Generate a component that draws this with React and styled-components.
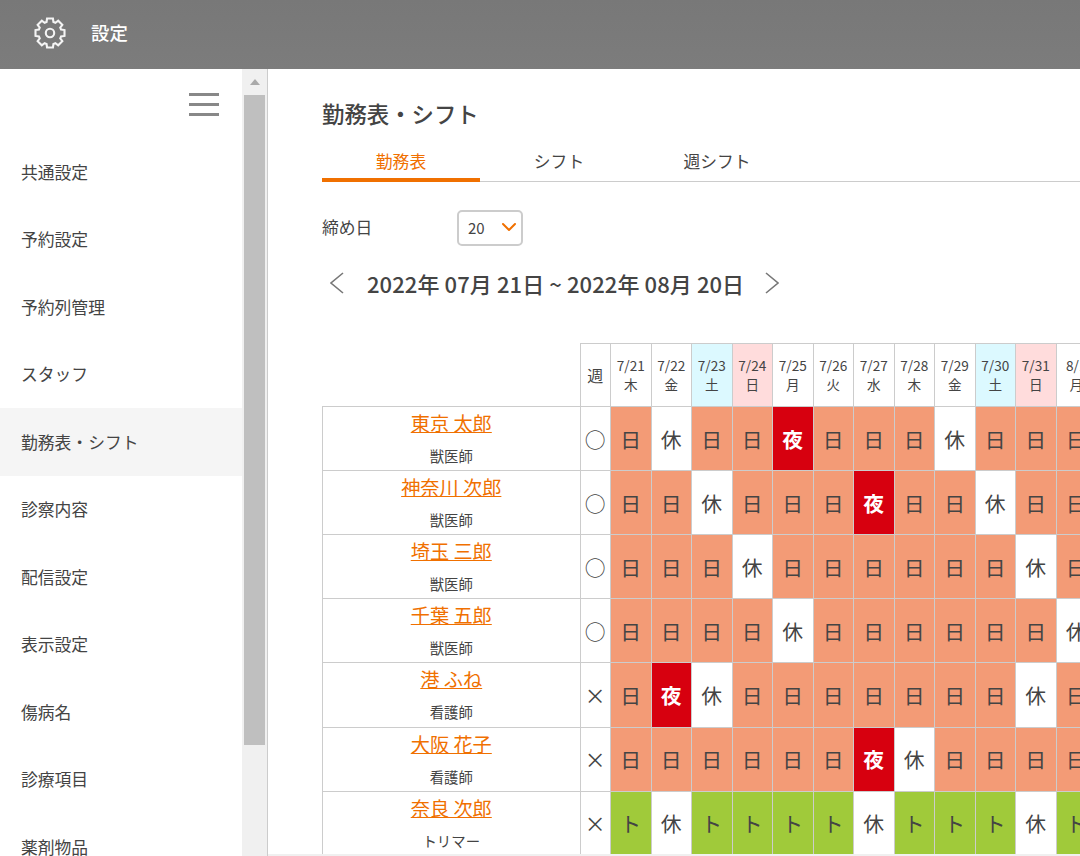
import React from 'react';
import styled, { createGlobalStyle } from 'styled-components';
import { ChevronDown } from 'lucide-react';

const menuItems = ['共通設定', '予約設定', '予約列管理', 'スタッフ', '勤務表・シフト', '診察内容', '配信設定', '表示設定', '傷病名', '診療項目', '薬剤物品'];

const days = [
  ['7/21', '木'], ['7/22', '金'], ['7/23', '土', 'sat'], ['7/24', '日', 'sun'], ['7/25', '月'], ['7/26', '火'],
  ['7/27', '水'], ['7/28', '木'], ['7/29', '金'], ['7/30', '土', 'sat'], ['7/31', '日', 'sun'], ['8/1', '月'],
];

const staff = [
  { name: '東京 太郎', role: '獣医師', week: '○', shifts: '日休日日夜日日日休日日日' },
  { name: '神奈川 次郎', role: '獣医師', week: '○', shifts: '日日休日日日夜日日休日日' },
  { name: '埼玉 三郎', role: '獣医師', week: '○', shifts: '日日日休日日日日日日休日' },
  { name: '千葉 五郎', role: '獣医師', week: '○', shifts: '日日日日休日日日日日日休' },
  { name: '港 ふね', role: '看護師', week: '×', shifts: '日夜休日日日日日日日休日' },
  { name: '大阪 花子', role: '看護師', week: '×', shifts: '日日日日日日夜休日日日日' },
  { name: '奈良 次郎', role: 'トリマー', week: '×', shifts: 'ト休トトトト休トトト休ト' },
];

const GlobalStyle = createGlobalStyle`
  html, body {
    margin: 0;
    height: 100%;
    overflow: hidden;
    background: #fff;
    color: #444;
    font-family: "Noto Sans CJK JP", "Noto Sans", sans-serif;
  }
`;

const Page = styled.div`
  display: flex;
  flex-direction: column;
  height: 856px;
  overflow: hidden;
`;

const Header = styled.header`
  display: flex;
  align-items: center;
  flex: 0 0 69px;
  box-sizing: border-box;
  padding: 0 0 3px 34px;
  gap: 25px;
  background: linear-gradient(#787878, #7c7c7c);
  color: #fff;
  font-size: 18.4px;
  font-weight: 500;

  span {
    margin-bottom: 2px;
  }
`;

const Body = styled.div`
  display: flex;
  flex: 1;
  min-height: 0;
`;

const Sidebar = styled.aside`
  display: flex;
  flex: 0 0 268px;
  border-right: 1px solid #ccc;
  box-sizing: border-box;
`;

const MenuColumn = styled.nav`
  flex: 1;
  min-width: 0;
  overflow: hidden;
`;

const MenuToggle = styled.div`
  display: flex;
  flex-direction: column;
  gap: 7px;
  width: 30px;
  height: 45px;
  margin: 24px 0 0 189px;

  span {
    display: block;
    height: 3px;
    background: #888;
  }
`;

const MenuItem = styled.div`
  display: flex;
  align-items: center;
  height: 67.5px;
  padding-left: 21px;
  font-size: 16.8px;
  color: #444;
  background: ${(p) => (p.$active ? '#f5f5f5' : 'transparent')};
`;

const Scrollbar = styled.div`
  flex: 0 0 25px;
  display: flex;
  flex-direction: column;
  align-items: center;
  background: #f0f0f0;
`;

const ScrollArrow = styled.div`
  flex: 0 0 26px;
  display: flex;
  align-items: center;
  justify-content: center;

  &::before {
    content: '';
    border-left: 5px solid transparent;
    border-right: 5px solid transparent;
    border-bottom: 6px solid #a9a9a9;
  }
`;

const ScrollThumb = styled.div`
  width: 21px;
  height: 650px;
  background: #bfbfbf;
`;

const Content = styled.div`
  display: flex;
  flex-direction: column;
  flex: 1;
  min-width: 0;
`;

const Main = styled.main`
  flex: 1;
  min-height: 0;
  overflow: hidden;
  padding: 30px 0 0 54px;
`;

const BottomTrack = styled.div`
  flex: 0 0 2px;
  background: #f0f0f0;
`;

const Title = styled.h1`
  margin: 0;
  font-size: 22.4px;
  line-height: 28px;
  font-weight: 500;
  color: #444;
`;

const Tabs = styled.div`
  display: flex;
  margin-top: 21px;
  border-bottom: 1px solid #ccc;
`;

const Tab = styled.div`
  width: 158px;
  height: 34px;
  box-sizing: border-box;
  text-align: center;
  font-size: 16.8px;
  line-height: 27px;
  margin-bottom: -1px;
  color: ${(p) => (p.$active ? '#f07000' : '#444')};
  border-bottom: ${(p) => (p.$active ? '4px solid #f07000' : 'none')};
`;

const FieldRow = styled.div`
  display: flex;
  align-items: center;
  margin-top: 28px;
  font-size: 16.8px;
`;

const FieldLabel = styled.label`
  width: 135px;
  margin-bottom: 2px;
`;

const Select = styled.div`
  display: flex;
  align-items: center;
  justify-content: space-between;
  box-sizing: border-box;
  width: 66px;
  height: 36px;
  padding: 0 0 2px 9px;
  border: 2px solid #ccc;
  border-radius: 5px;
  font-size: 15px;
  color: #444;
`;

const RangeRow = styled.div`
  display: flex;
  align-items: center;
  margin-top: 17px;
  height: 40px;
  padding-left: 8px;
`;

const RangeText = styled.div`
  margin: 0 21px 0 23px;
  font-size: 22px;
  font-weight: 500;
  color: #444;
  letter-spacing: 0.08px;
  white-space: nowrap;
`;

const Table = styled.table`
  margin-top: 40px;
  border-collapse: collapse;
  table-layout: fixed;
  width: 774px;
  color: #444;

  td, th {
    padding: 0;
    border: 1px solid #ccc;
    text-align: center;
    font-weight: 400;
  }
`;

const BlankHead = styled.th`
  && {
    border-top: none;
    border-left: none;
  }
`;

const HeadRow = styled.tr`
  height: 63px;
`;

const Row = styled.tr`
  height: 64.11px;
`;

const WeekHead = styled.th`
  font-size: 16px;
`;

const DayHead = styled.th`
  font-size: 13.6px;
  line-height: 19px;
  background: ${(p) => (p.$kind === 'sat' ? '#dcf9ff' : p.$kind === 'sun' ? '#ffdcdc' : '#fff')};
`;

const NameCell = styled.td`
  vertical-align: top;
`;

const StaffName = styled.a`
  display: block;
  font-size: 19.2px;
  line-height: 32px;
  color: #f07000;
  text-decoration: underline;
`;

const StaffRole = styled.div`
  margin: 2px 0 -3px;
  font-size: 14.4px;
  line-height: 30px;
`;

const WeekCell = styled.td`
  font-size: 20.8px;
`;

const shiftColors = { 日: '#f39b76', 夜: '#d7000f', 休: '#fff', ト: '#a0ca3a' };

const ShiftCell = styled.td`
  font-size: 20.8px;
  background: ${(p) => shiftColors[p.$shift]};
  color: ${(p) => (p.$shift === '夜' ? '#fff' : '#444')};
  font-weight: ${(p) => (p.$shift === '夜' ? 700 : 400)} !important;
`;

// gear outline with 8 square teeth, radii in the 32 unit viewBox
function gearPath() {
  const points = [];
  for (let i = 0; i < 8; i++) {
    const a = (i * Math.PI) / 4;
    [[-0.3, 11.6], [-0.2, 14.8], [0.2, 14.8], [0.3, 11.6]].forEach(([off, r]) => {
      points.push(`${(16 + r * Math.cos(a + off)).toFixed(2)} ${(16 + r * Math.sin(a + off)).toFixed(2)}`);
    });
  }
  return `M${points.join('L')}Z`;
}

function GearIcon() {
  return (
    <svg width="32" height="32" viewBox="0 0 32 32" fill="none" stroke="#f4f4f4" strokeWidth="2.1" strokeLinejoin="miter">
      <path d={gearPath()} />
      <circle cx="16" cy="16" r="4.2" />
    </svg>
  );
}

function Arrow({ left }) {
  return (
    <svg width="14" height="24" viewBox="0 0 14 24" fill="none" stroke="#777" strokeWidth="1.6">
      <polyline points={left ? '13,2 1,12 13,22' : '1,2 13,12 1,22'} />
    </svg>
  );
}

export default function App() {
  return (
    <Page>
      <GlobalStyle />
      <Header>
        <GearIcon />
        <span>設定</span>
      </Header>
      <Body>
        <Sidebar>
          <MenuColumn>
            <MenuToggle><span /><span /><span /></MenuToggle>
            {menuItems.map((item) => (
              <MenuItem key={item} $active={item === '勤務表・シフト'}>{item}</MenuItem>
            ))}
          </MenuColumn>
          <Scrollbar>
            <ScrollArrow />
            <ScrollThumb />
          </Scrollbar>
        </Sidebar>
        <Content>
          <Main>
            <Title>勤務表・シフト</Title>
            <Tabs>
              <Tab $active>勤務表</Tab>
              <Tab>シフト</Tab>
              <Tab>週シフト</Tab>
            </Tabs>
            <FieldRow>
              <FieldLabel>締め日</FieldLabel>
              <Select>
                20
                <ChevronDown size={24} color="#f07000" strokeWidth={2} />
              </Select>
            </FieldRow>
            <RangeRow>
              <Arrow left />
              <RangeText>2022年 07月 21日 ~ 2022年 08月 20日</RangeText>
              <Arrow />
            </RangeRow>
            <Table>
              <colgroup>
                <col style={{ width: 257.5 }} />
                <col style={{ width: 30.5 }} />
                {days.map(([date]) => <col key={date} style={{ width: 40.5 }} />)}
              </colgroup>
              <thead>
                <HeadRow>
                  <BlankHead />
                  <WeekHead>週</WeekHead>
                  {days.map(([date, weekday, kind]) => (
                    <DayHead key={date} $kind={kind}>{date}<br />{weekday}</DayHead>
                  ))}
                </HeadRow>
              </thead>
              <tbody>
                {staff.map((person) => (
                  <Row key={person.name}>
                    <NameCell>
                      <StaffName>{person.name}</StaffName>
                      <StaffRole>{person.role}</StaffRole>
                    </NameCell>
                    <WeekCell>{person.week}</WeekCell>
                    {[...person.shifts].map((shift, i) => (
                      <ShiftCell key={i} $shift={shift}>{shift}</ShiftCell>
                    ))}
                  </Row>
                ))}
              </tbody>
            </Table>
          </Main>
          <BottomTrack />
        </Content>
      </Body>
    </Page>
  );
}
